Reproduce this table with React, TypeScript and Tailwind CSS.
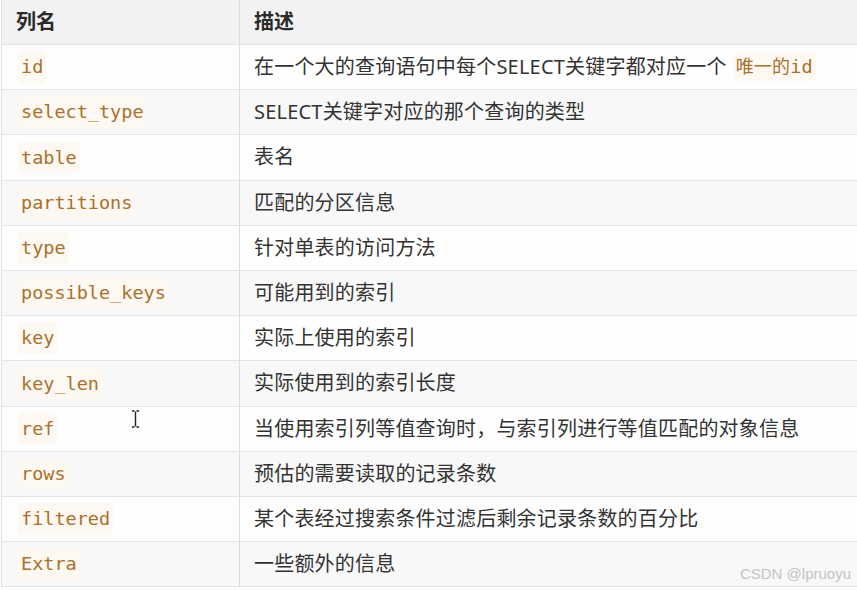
const rows: [string, React.ReactNode][] = [
  ["id", null],
  ["select_type", "SELECT关键字对应的那个查询的类型"],
  ["table", "表名"],
  ["partitions", "匹配的分区信息"],
  ["type", "针对单表的访问方法"],
  ["possible_keys", "可能用到的索引"],
  ["key", "实际上使用的索引"],
  ["key_len", "实际使用到的索引长度"],
  ["ref", "当使用索引列等值查询时，与索引列进行等值匹配的对象信息"],
  ["rows", "预估的需要读取的记录条数"],
  ["filtered", "某个表经过搜索条件过滤后剩余记录条数的百分比"],
  ["Extra", "一些额外的信息"],
];

const mono = "font-['DejaVu_Sans_Mono','Liberation_Mono',monospace]";

function Code({ children }: { children: React.ReactNode }) {
  return (
    <span className={`${mono} rounded bg-[#fdf8f2] px-[3px] py-[2px] text-[18.5px] text-[#a9712c]`}>
      {children}
    </span>
  );
}

export default function App() {
  return (
    <div className="relative h-[590px] w-[857px] overflow-hidden bg-white font-['Noto_Sans','Noto_Sans_CJK_SC',sans-serif] text-[#333]">
      <div className="ml-[1px] w-[900px] border-l border-[#dedede]">
        <div className="flex h-[45px] border-b border-[#e2e2e2] bg-[#f2f2f2] text-[20px] font-bold text-[#2a2a2a]">
          <div className="flex w-[238px] items-center border-r border-[#dcdcdc] pl-[14px]">列名</div>
          <div className="flex flex-1 items-center pl-[14px]">描述</div>
        </div>
        {rows.map(([name, desc], i) => (
          <div
            key={name}
            className={`flex h-[45.2px] border-b border-[#e4e4e4] ${i % 2 === 1 ? "bg-[#f8f8f8]" : "bg-[#fefefe]"}`}
          >
            <div className="flex w-[238px] items-center border-r border-[#dcdcdc] pl-[16px]">
              <Code>{name}</Code>
            </div>
            <div className="flex flex-1 items-center pl-[14px] text-[20px] tracking-[0.2px]">
              {desc ?? (
                <>
                  在一个大的查询语句中每个SELECT关键字都对应一个
                  <span className="ml-[6px] rounded bg-[#fdf8f2] px-[3px] text-[18px] text-[#a9712c]">
                    唯一的<span className={`${mono} text-[18.5px]`}>id</span>
                  </span>
                </>
              )}
            </div>
          </div>
        ))}
      </div>

      <svg className="absolute left-[131px] top-[410px]" width="9" height="18" viewBox="0 0 9 18">
        <path d="M1 1h2.5M5.5 1H8M4.5 1.5v15M1 17h2.5M5.5 17H8" stroke="#222" strokeWidth="1.4" fill="none" />
      </svg>

      <div className="absolute bottom-[5px] right-[6px] font-['Liberation_Sans',Arial,sans-serif] text-[15px] text-[#c4c4c4]">
        CSDN @lpruoyu
      </div>
    </div>
  );
}
